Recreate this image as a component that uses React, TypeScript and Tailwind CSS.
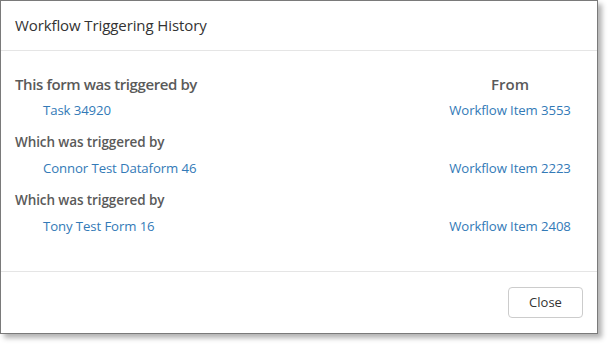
export default function App() {
  const rows = [
    { heading: 'This form was triggered by', name: 'Task 34920', item: 'Workflow Item 3553' },
    { heading: 'Which was triggered by', name: 'Connor Test Dataform 46', item: 'Workflow Item 2223' },
    { heading: 'Which was triggered by', name: 'Tony Test Form 16', item: 'Workflow Item 2408' },
  ];

  return (
    <div className="w-[609px] h-[344px] bg-white" style={{ fontFamily: '"Open Sans", "Noto Sans", sans-serif' }}>
      <div className="w-[598px] h-[334px] flex flex-col bg-white border border-[#7a7a7a] shadow-[4px_4px_5px_rgba(0,0,0,0.3)]">
        {/* Header */}
        <div className="h-[50px] shrink-0 flex items-center px-[14px] border-b border-[#e5e5e5]">
          <h4 className="text-[15px] text-[#333] tracking-[-0.1px]">Workflow Triggering History</h4>
        </div>

        {/* Body */}
        <div className="flex-1 px-[14px] pt-[23px] flex flex-col">
          {rows.map((r, i) => (
            <div key={i} className={i > 0 ? 'mt-[13px]' : ''}>
              <div className="flex h-[20px] items-center">
                <div
                  className={`flex-1 font-semibold text-[#5a5a5a] ${
                    i === 0 ? 'text-[15px] tracking-[-0.4px]' : 'text-[13.5px] tracking-[-0.1px]'
                  }`}
                >
                  {r.heading}
                </div>
                <div className="w-[146px] text-center font-semibold text-[15px] text-[#5a5a5a]">
                  {i === 0 ? 'From' : ''}
                </div>
              </div>
              <div className="flex h-[20px] items-center mt-[5px]">
                <div className="flex-1 pl-[28px]">
                  <a className="text-[13.2px] text-[#337ab7] tracking-[-0.1px]">{r.name}</a>
                </div>
                <div className="w-[146px] text-center">
                  <a className="text-[13.2px] text-[#337ab7] tracking-[-0.1px]">{r.item}</a>
                </div>
              </div>
            </div>
          ))}
        </div>

        {/* Footer */}
        <div className="h-[62px] shrink-0 border-t border-[#e5e5e5] flex justify-end items-start pt-[15px] pr-[14px]">
          <button className="w-[75px] h-[31px] rounded-[4px] border border-[#cccccc] bg-white text-[13px] text-[#333]">
            Close
          </button>
        </div>
      </div>
    </div>
  );
}
